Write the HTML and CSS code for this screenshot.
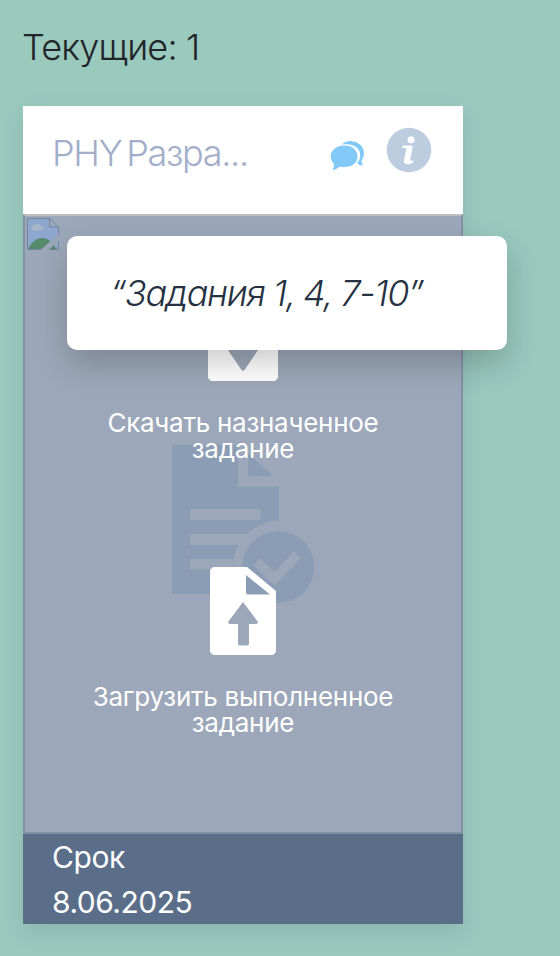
FILE: index.html
```html
<!DOCTYPE html>
<html lang="ru">
<head>
<meta charset="utf-8">
<title>Задания</title>
<link rel="stylesheet" href="styles.css">
</head>
<body>
<main class="page">
  <h1 class="title">Текущие: 1</h1>
  <article class="card">
    <header class="card-head">
      <h2 class="subject">PHY Разра...</h2>
      <svg class="chat" viewBox="0 0 36 32" fill="#80c9f9">
        <path d="M12 4.500C15 1.500 19 .8 22 1.200c7 .8 12 5.500 12 11.800 0 3-1 5.500-2.500 7.500 0 2 1 4 2 5-3 0-5-.8-6.500-2.500 5.500-6 4-14.500-4-17.500-3-1.200-7-1.700-11-1z"/>
        <path d="M14.500 5.500C22 5.500 27.500 10 27.500 16.500S22 27 14.500 27c-2 0-3.500 0-5-.6C7.500 28.500 5 30 2.500 30c1-2 2-4 1.500-6C2 22 .8 19 .8 16.500.8 10 7 5.500 14.500 5.500z"/>
      </svg>
      <svg class="info" viewBox="0 0 46 46">
        <circle cx="23" cy="23" r="22.300" fill="#bccde0"/>
        <circle cx="25" cy="12.800" r="3.500" fill="#fff"/>
        <path d="M17.500 18.500h7.300c1.500 0 2 .8 1.700 2.200L24 34c1.200-.1 2.300-.8 3.200-.2 1 1.500-2 3.500-5.500 3.500-3 0-4.300-1.600-3.700-4.200L20.500 21.200h-3c-1.700-.4-1.700-2.200 0-2.700z" fill="#fff"/>
      </svg>
    </header>
    <section class="card-body">
      <svg class="missing" viewBox="0 0 32 32">
        <path d="M.5.500h22l9 8.500v22.500H.5z" fill="#8ea7ce"/>
        <path d="M22.500.5V9h9z" fill="#9ca8b9"/>
        <path d="M5 12.500c-2-3 0-4.500 2-4.500 1-3 6-3 7 0 3 0 3 4.500 1 4.500z" fill="#a8b5c8"/>
        <path d="M1 31c4-7 8-11 14-11s11 4 14 11z" fill="#568b6c"/>
        <path d="M.5.500h22l9 8.500v22.500H.5zM22.500.5V9h9" fill="none" stroke="#75859d"/>
        <path d="M32 15.500v7.500L21.500 32H13.500z" fill="#9ca8b9"/>
      </svg>
      <svg class="watermark" viewBox="0 0 144 160" fill="#8b9db4">
        <path d="M0 0h66v41.500h41v34c-16 0-37 11-44 34-4 14-2 29 5 39.500H0z"/>
        <path d="M76.300 8.500L101 31H76.300z"/>
        <path d="M18 64h70.500v11H18zM18 89h60q-5 5-8 11H18zM18 114h43.500l-1.500 10.500H18z" fill="#9ca8b9"/>
        <circle cx="106.300" cy="122" r="36"/>
        <path d="M81.300 120l6.700-6.700 14.300 13.400 19.700-20 6.700 6.600L102.300 141z" fill="#9ca8b9"/>
      </svg>
      <div class="action download">
        <svg class="file-down" viewBox="0 0 70 88">
          <path d="M3 0h38l29 27v58l-3 3H3l-3-3V3z" fill="#fff"/>
          <path d="M29 32h12v20h12.500L36.500 77q-1.500 1.500-3 0L16.500 52H29z" fill="#9ca8b9"/>
        </svg>
        <p class="label">Скачать назначенное задание</p>
      </div>
      <div class="action">
        <svg class="file-up" viewBox="0 0 66 88">
          <path d="M3 0h34l29 24v61l-3 3H3l-3-3V3z" fill="#fff"/>
          <path d="M36 8l24 19.500H38q-2 0-2-2z" fill="#8b9db4"/>
          <path d="M33 35l15 20q0 2-2 2h-7v19.500q0 2-2 2h-7q-2 0-2-2V57h-8q-2 0-2-2z" fill="#9ca8b9"/>
        </svg>
        <p class="label">Загрузить выполненное задание</p>
      </div>
    </section>
    <footer class="card-foot">
      <span class="due-label">Срок</span>
      <time class="due-date">8.06.2025</time>
    </footer>
    <div class="tooltip"><em class="quote">“Задания 1, 4, 7-10”</em></div>
  </article>
</main>
</body>
</html>
```
FILE: styles.css
```css
* { box-sizing: border-box; }
body {
  margin: 0;
  background: #9ac9be;
  color: #212529;
  font-family: Inter, "Open Sans", sans-serif;
}
.page { height: 956px; padding: 25px 23px 0; overflow: hidden; }
.title {
  margin: 0 0 37px -1px;
  font-size: 36px;
  font-weight: 300;
  line-height: 44px;
  letter-spacing: -0.8px;
}
.card {
  position: relative;
  width: 440px;
  height: 818px;
  display: flex;
  flex-direction: column;
  box-shadow: 0 8px 20px rgba(55, 85, 85, .15);
}
.card-head {
  display: flex;
  height: 108px;
  padding: 21px 31px 0 30px;
  background: #fff;
}
.subject {
  flex: 1;
  margin: 4px 0 0 -1px;
  color: #a2aec9;
  font-size: 36px;
  font-weight: 300;
  line-height: 44px;
  letter-spacing: -1.3px;
  word-spacing: -4px;
  white-space: nowrap;
}
.chat { width: 36px; height: 32px; margin: 13px 20px 0 0; }
.info { width: 46px; height: 46px; }
.card-body {
  position: relative;
  height: 620px;
  padding-top: 77px;
  background: #9ca8b9;
  border: 2px solid #8490a5;
  border-top-color: #bcbebf;
}
.missing { position: absolute; left: 2px; top: 2px; width: 32px; height: 32px; }
.watermark { position: absolute; left: 147px; top: 229px; width: 144px; height: 160px; }
.action {
  position: relative;
  display: flex;
  flex-direction: column;
  align-items: center;
  width: 320px;
  margin: 0 auto;
}
.file-down { width: 70px; height: 88px; }
.file-up { width: 66px; height: 88px; }
.label {
  margin: 29px 0 0;
  color: #fff;
  font-size: 26px;
  font-weight: 400;
  line-height: 26px;
  letter-spacing: -0.27px;
  text-align: center;
}
.download { height: 274px; }
.card-foot {
  display: flex;
  flex-direction: column;
  height: 90px;
  padding: 1px 0 0 29px;
  background: #5a6e8a;
  color: #fff;
  font-size: 30px;
  line-height: 45px;
}
.due-label { letter-spacing: -0.4px; }
.due-date { letter-spacing: -0.5px; }
.tooltip {
  position: absolute;
  left: 44px;
  top: 130px;
  width: 440px;
  height: 114px;
  padding: 35px 43px;
  border-radius: 10px;
  background: #fff;
  box-shadow: 0 14px 32px rgba(0, 0, 0, .2);
}
.quote {
  display: block;
  color: #263142;
  font-size: 36px;
  font-weight: 300;
  line-height: 44px;
  letter-spacing: -1.3px;
  word-spacing: -0.5px;
  white-space: nowrap;
}
```
